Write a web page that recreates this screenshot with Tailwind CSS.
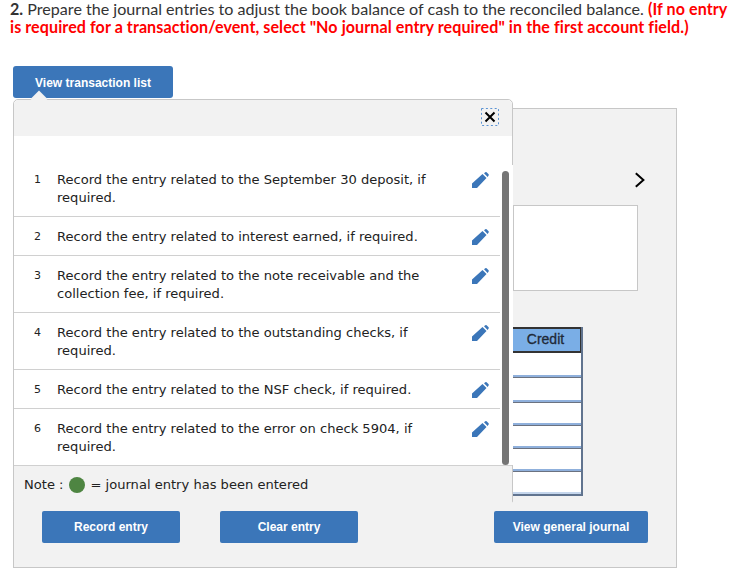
<!DOCTYPE html>
<html lang="en">
<head>
  <meta charset="UTF-8" />
  <title>Journal entries</title>
  <script src="https://cdn.jsdelivr.net/npm/@tailwindcss/browser@4"></script>
</head>
<body class="bg-white w-[731px] h-[588px] overflow-hidden font-['Lato',sans-serif]">

  <div class="px-[10px] text-[16.1px] leading-[17.5px] text-[#333] h-[66px]">
    <p class="w-[720px]"><b>2.</b> Prepare the journal entries to adjust the book balance of cash to the reconciled balance. <b class="text-[#f00] tracking-[0.07px]">(If no entry</b><br><b class="text-[#f00] tracking-[0.07px]">is required for a transaction/event, select "No journal entry required" in the first account field.)</b></p>
  </div>

  <div class="relative ml-[13px] w-[664px]">
    <button class="block w-[160px] h-[32px] pt-[2px] bg-[#3b76b9] rounded-[3px] text-white text-[12px] font-bold font-['Liberation_Sans',sans-serif]">View transaction list</button>

    <!-- panel behind the popup -->
    <div class="mt-[10px] h-[460px] bg-[#f2f2f2] border border-[#c7c7c7] relative">
      <svg class="absolute left-[620px] top-[63px]" width="14" height="16" viewBox="0 0 14 16"><path d="M1.8 1.2l7.6 6.8-7.6 6.8" fill="none" stroke="#000" stroke-width="2"/></svg>
      <div class="absolute left-[499px] top-[96px] w-[125px] h-[86px] bg-white border border-[#c7c7c7]"></div>

      <div class="absolute left-[499px] top-[218px] w-[70px] border-r-2 border-b-2 border-[#61748f]">
        <div class="h-[26px] pr-[2px] bg-[#7aaee6] border-t-2 border-b-2 border-r border-[#333] text-center text-[14px] leading-[20px] text-[#1f2937] [-webkit-text-stroke:0.3px_#1f2937] font-['Liberation_Sans',sans-serif]">Credit</div>
        <div class="h-[25px] bg-white border-b border-[#6b7280] shadow-[inset_0_-2px_0_#8fb0dc]"></div>
        <div class="h-[25px] bg-white border-b border-[#6b7280] shadow-[inset_0_-2px_0_#8fb0dc]"></div>
        <div class="h-[23px] bg-white border-b border-[#6b7280] shadow-[inset_0_-2px_0_#8fb0dc]"></div>
        <div class="h-[23px] bg-white border-b border-[#6b7280] shadow-[inset_0_-2px_0_#8fb0dc]"></div>
        <div class="h-[23px] bg-white border-b border-[#6b7280] shadow-[inset_0_-2px_0_#8fb0dc]"></div>
        <div class="h-[22px] bg-white shadow-[inset_0_-2px_0_#c5d6ec]"></div>
      </div>

      <div class="absolute left-[28px] top-[402px] right-[28px] flex gap-[40px] text-white text-[12px] font-bold font-['Liberation_Sans',sans-serif]">
        <button class="w-[138px] h-[32px] bg-[#3b76b9] rounded-[2px]">Record entry</button>
        <button class="w-[138px] h-[32px] bg-[#3b76b9] rounded-[2px]">Clear entry</button>
        <button class="ml-auto w-[154px] h-[32px] bg-[#3b76b9] rounded-[2px]">View general journal</button>
      </div>
    </div>

    <!-- transaction list popup -->
    <div class="absolute left-0 top-[33px] w-[500px] h-[404px] bg-white border border-[#c7c7c7] rounded-t-[5px] rounded-b-[2px] font-['DejaVu_Sans',sans-serif] text-[13.07px] leading-[18px] text-[#222] flex flex-col">
      <div class="absolute left-[19px] top-[-7px] w-[12px] h-[12px] rotate-45 bg-[#f2f2f2]"></div>
      <div class="relative h-[36px] bg-[#f2f2f2] rounded-t-[5px] shrink-0">
        <svg class="absolute left-[466px] top-[7px]" width="20" height="20" viewBox="0 0 20 20">
          <rect x="1.5" y="1.5" width="17" height="17" fill="none" stroke="#5b93d3" stroke-dasharray="2 2.4"/>
          <path d="M5.5 5.5l9 9M14.5 5.5l-9 9" stroke="#000" stroke-width="2"/>
        </svg>
      </div>

      <div class="relative flex-1 pt-[26px]">
        <div class="h-[55px] pt-[9px] pl-[20px] flex border-b border-[#d0d0d0] mr-[12px]">
          <span class="w-[23px] text-[11px]">1</span>
          <span class="w-[415px] pr-[30px]">Record the entry related to the September 30 deposit, if required.</span>
          <svg class="mt-[1px]" width="18" height="16" viewBox="0 0 18 16"><path d="M0 16v-4.5L10.5 2l4 4L5 16zM12 1.3l1.3-1q.7-.4 1.3 0l2 2q.4.6 0 1.3l-1 1.3z" fill="#3b76b9"/></svg>
        </div>
        <div class="h-[39px] pt-[11px] pl-[20px] flex border-b border-[#d0d0d0] mr-[12px]">
          <span class="w-[23px] text-[11px]">2</span>
          <span class="w-[415px] pr-[30px]">Record the entry related to interest earned, if required.</span>
          <svg class="mt-[1px]" width="18" height="16" viewBox="0 0 18 16"><path d="M0 16v-4.5L10.5 2l4 4L5 16zM12 1.3l1.3-1q.7-.4 1.3 0l2 2q.4.6 0 1.3l-1 1.3z" fill="#3b76b9"/></svg>
        </div>
        <div class="h-[57px] pt-[11px] pl-[20px] flex border-b border-[#d0d0d0] mr-[12px]">
          <span class="w-[23px] text-[11px]">3</span>
          <span class="w-[415px] pr-[30px]">Record the entry related to the note receivable and the collection fee, if required.</span>
          <svg class="mt-[1px]" width="18" height="16" viewBox="0 0 18 16"><path d="M0 16v-4.5L10.5 2l4 4L5 16zM12 1.3l1.3-1q.7-.4 1.3 0l2 2q.4.6 0 1.3l-1 1.3z" fill="#3b76b9"/></svg>
        </div>
        <div class="h-[57px] pt-[11px] pl-[20px] flex border-b border-[#d0d0d0] mr-[12px]">
          <span class="w-[23px] text-[11px]">4</span>
          <span class="w-[415px] pr-[30px]">Record the entry related to the outstanding checks, if required.</span>
          <svg class="mt-[1px]" width="18" height="16" viewBox="0 0 18 16"><path d="M0 16v-4.5L10.5 2l4 4L5 16zM12 1.3l1.3-1q.7-.4 1.3 0l2 2q.4.6 0 1.3l-1 1.3z" fill="#3b76b9"/></svg>
        </div>
        <div class="h-[39px] pt-[11px] pl-[20px] flex border-b border-[#d0d0d0] mr-[12px]">
          <span class="w-[23px] text-[11px]">5</span>
          <span class="w-[415px] pr-[30px]">Record the entry related to the NSF check, if required.</span>
          <svg class="mt-[1px]" width="18" height="16" viewBox="0 0 18 16"><path d="M0 16v-4.5L10.5 2l4 4L5 16zM12 1.3l1.3-1q.7-.4 1.3 0l2 2q.4.6 0 1.3l-1 1.3z" fill="#3b76b9"/></svg>
        </div>
        <div class="h-[56px] pt-[11px] pl-[20px] flex mr-[12px]">
          <span class="w-[23px] text-[11px]">6</span>
          <span class="w-[415px] pr-[30px]">Record the entry related to the error on check 5904, if required.</span>
          <svg class="mt-[1px]" width="18" height="16" viewBox="0 0 18 16"><path d="M0 16v-4.5L10.5 2l4 4L5 16zM12 1.3l1.3-1q.7-.4 1.3 0l2 2q.4.6 0 1.3l-1 1.3z" fill="#3b76b9"/></svg>
        </div>
        <div class="absolute left-[488px] top-[35px] w-[7px] h-[294px] rounded-full bg-[#757575]"></div>
        <div class="absolute right-[-1px] top-[29px] bottom-0 w-[1px] bg-white"></div>
      </div>

      <div class="h-[38px] shrink-0 bg-[#f2f2f2] border-t border-[#d0d0d0] flex items-center pl-[10px] gap-[5px]">
        <span>Note :</span>
        <span class="ml-[1px] w-[16px] h-[16px] rounded-full bg-[#4e8542]"></span>
        <span>= journal entry has been entered</span>
      </div>
    </div>
  </div>

</body>
</html>
